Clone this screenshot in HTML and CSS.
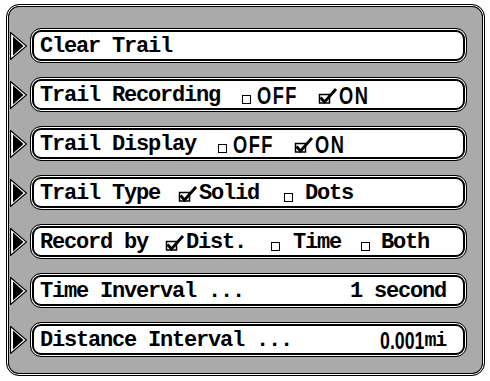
FILE: index.html
```html
<!DOCTYPE html>
<html>
<head>
<meta charset="utf-8">
<link rel="stylesheet" href="styles.css">
</head>
<body>
<svg width="0" height="0" class="defs">
  <defs>
    <symbol id="arrow" viewBox="0 0 17 28">
      <polygon points="0.5,0.5 16.5,14 0.5,27.5" fill="#fff" stroke="#000" stroke-width="1.2"/>
      <polygon points="3,4.5 13.5,14 3,23.5" fill="#000"/>
    </symbol>
    <symbol id="chk" viewBox="0 0 21 16">
      <rect x="1.5" y="6.5" width="10" height="8.5" fill="none" stroke="#000" stroke-width="1.5"/>
      <polyline points="2.5,9.5 6.5,14 18,1" fill="none" stroke="#000" stroke-width="2.8"/>
    </symbol>
  </defs>
</svg>
<div class="panel">
  <div class="row">
    <svg class="arrow"><use href="#arrow"/></svg>
    <div class="btn"><span class="mono">Clear Trail</span></div>
  </div>
  <div class="row">
    <svg class="arrow"><use href="#arrow"/></svg>
    <div class="btn">
      <span class="mono">Trail Recording</span>
      <span class="box b-rec1"></span><span class="nar off">OFF</span>
      <svg class="chk c-rec"><use href="#chk"/></svg><span class="nar on">ON</span>
    </div>
  </div>
  <div class="row">
    <svg class="arrow"><use href="#arrow"/></svg>
    <div class="btn">
      <span class="mono">Trail Display</span>
      <span class="box b-disp"></span><span class="nar off">OFF</span>
      <svg class="chk c-disp"><use href="#chk"/></svg><span class="nar on">ON</span>
    </div>
  </div>
  <div class="row">
    <svg class="arrow"><use href="#arrow"/></svg>
    <div class="btn">
      <span class="mono">Trail Type</span>
      <svg class="chk c-type"><use href="#chk"/></svg><span class="mono">Solid</span>
      <span class="box b-dots"></span><span class="mono">Dots</span>
    </div>
  </div>
  <div class="row">
    <svg class="arrow"><use href="#arrow"/></svg>
    <div class="btn">
      <span class="mono">Record by</span>
      <svg class="chk c-rb"><use href="#chk"/></svg><span class="mono">Dist.</span>
      <span class="box b-time"></span><span class="mono">Time</span>
      <span class="box b-both"></span><span class="mono">Both</span>
    </div>
  </div>
  <div class="row">
    <svg class="arrow"><use href="#arrow"/></svg>
    <div class="btn">
      <span class="mono">Time Inverval ...</span>
      <span class="val mono">1 second</span>
    </div>
  </div>
  <div class="row">
    <svg class="arrow"><use href="#arrow"/></svg>
    <div class="btn">
      <span class="mono">Distance Interval ...</span>
      <span class="val"><span class="nar num">0.001</span><span class="mono mi">mi</span></span>
    </div>
  </div>
</div>
</body>
</html>
```
FILE: styles.css
```css
html, body {
  margin: 0;
  padding: 0;
  background: #fff;
}
.defs {
  position: absolute;
  width: 0;
  height: 0;
}
.panel {
  box-sizing: border-box;
  margin: 4px 0 0 6px;
  width: 479px;
  height: 372px;
  border: 1px solid #000;
  border-radius: 13px;
  box-shadow: inset 0 0 0 1px #fff, inset 0 0 0 2px #000;
  background: #aaaaaa;
  padding: 23px 0 0 3px;
  display: flex;
  flex-direction: column;
  gap: 14px;
}
.row {
  display: flex;
  align-items: center;
  gap: 3px;
  height: 35px;
}
.arrow {
  width: 17px;
  height: 28px;
  flex: none;
}
.btn {
  box-sizing: border-box;
  width: 437px;
  height: 35px;
  border: 1px solid #000;
  border-radius: 11px;
  box-shadow: inset 0 0 0 1px #fff, inset 0 0 0 3px #000;
  background: #fff;
  display: flex;
  align-items: center;
  padding: 2px 20px 0 9px;
  color: #000;
}
.mono {
  font-family: "Liberation Mono", monospace;
  font-weight: bold;
  font-size: 22px;
  letter-spacing: -1.2px;
  white-space: pre;
  line-height: 1;
}
.nar {
  display: inline-block;
  font-family: "Liberation Sans", Arial, sans-serif;
  font-weight: bold;
  font-size: 24px;
  line-height: 1;
  transform: scaleX(0.76);
  transform-origin: left center;
  white-space: pre;
}
.off {
  letter-spacing: 2px;
  margin-right: -13px;
}
.on {
  letter-spacing: 2px;
  margin-right: -10px;
}
.num {
  letter-spacing: 0;
  transform: scaleX(0.74);
  margin-right: -16px;
}
.box {
  width: 7px;
  height: 7px;
  border: 1px solid #000;
  align-self: center;
  margin-top: 8px;
  flex: none;
}
.chk {
  width: 21px;
  height: 16px;
  flex: none;
  margin-top: 1px;
}
.b-rec1 { margin-left: 22px; margin-right: 6px; }
.c-rec { margin-left: 20px; }
.b-disp { margin-left: 22px; margin-right: 6px; }
.c-disp { margin-left: 20px; }
.c-type { margin-left: 18px; }
.b-dots { margin-left: 25px; margin-right: 12px; }
.c-rb { margin-left: 17px; }
.b-time { margin-left: 25px; margin-right: 13px; }
.b-both { margin-left: 20px; margin-right: 11px; }
.val {
  margin-left: auto;
  display: flex;
  align-items: center;
}
.mi {
  font-size: 20px;
}
```
